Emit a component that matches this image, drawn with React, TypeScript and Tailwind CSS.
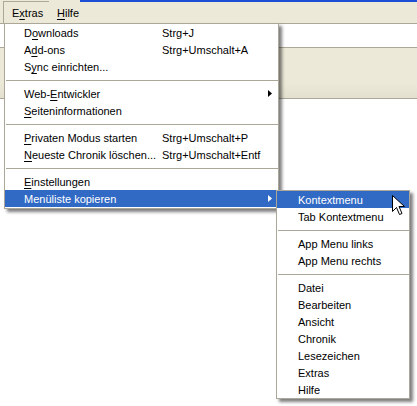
import React from "react";

type Item =
  | { kind: "item"; label: React.ReactNode; shortcut?: string; arrow?: boolean; active?: boolean }
  | { kind: "sep" };

// underline one letter of a label (access key)
function K({ pre, k, post }: { pre?: string; k: string; post?: string }) {
  return (
    <>
      {pre}
      <span className="underline underline-offset-[2px] decoration-1">{k}</span>
      {post}
    </>
  );
}

const mainItems: Item[] = [
  { kind: "item", label: <K pre="D" k="o" post="wnloads" />, shortcut: "Strg+J" },
  { kind: "item", label: <K pre="A" k="d" post="d-ons" />, shortcut: "Strg+Umschalt+A" },
  { kind: "item", label: <K pre="S" k="y" post="nc einrichten..." /> },
  { kind: "sep" },
  { kind: "item", label: <K pre="Web-" k="E" post="ntwickler" />, arrow: true },
  { kind: "item", label: <K k="S" post="eiteninformationen" /> },
  { kind: "sep" },
  { kind: "item", label: <K k="P" post="rivaten Modus starten" />, shortcut: "Strg+Umschalt+P" },
  { kind: "item", label: <K k="N" post="eueste Chronik löschen..." />, shortcut: "Strg+Umschalt+Entf" },
  { kind: "sep" },
  { kind: "item", label: <K k="E" post="instellungen" /> },
  { kind: "item", label: "Menüliste kopieren", arrow: true, active: true },
];

const subItems: Item[] = [
  { kind: "item", label: "Kontextmenu", active: true },
  { kind: "item", label: "Tab Kontextmenu" },
  { kind: "sep" },
  { kind: "item", label: "App Menu links" },
  { kind: "item", label: "App Menu rechts" },
  { kind: "sep" },
  { kind: "item", label: "Datei" },
  { kind: "item", label: "Bearbeiten" },
  { kind: "item", label: "Ansicht" },
  { kind: "item", label: "Chronik" },
  { kind: "item", label: "Lesezeichen" },
  { kind: "item", label: "Extras" },
  { kind: "item", label: "Hilfe" },
];

function Arrow({ white }: { white?: boolean }) {
  return (
    <svg width="4" height="7" viewBox="0 0 4 7" className="block">
      <path d="M0 0 L4 3.5 L0 7 Z" fill={white ? "#ffffff" : "#000000"} />
    </svg>
  );
}

function Menu({ items, textLeft }: { items: Item[]; textLeft: string }) {
  return (
    <div className="flex flex-col">
      {items.map((it, i) =>
        it.kind === "sep" ? (
          <div key={i} className="h-[10px] flex items-center pl-px">
            <div className="h-px w-full bg-[#aca899]" />
          </div>
        ) : (
          <div
            key={i}
            className={`h-[17px] flex items-center pt-[2px] ${textLeft} pr-[6px] ${
              it.active ? "bg-[#316ac5] text-white" : "text-black"
            }`}
          >
            <span className="w-[138px] shrink-0 whitespace-nowrap">{it.label}</span>
            <span className="flex-1 whitespace-nowrap">{it.shortcut}</span>
            {it.arrow && (
              <span className="-mt-[2px]">
                <Arrow white={it.active} />
              </span>
            )}
          </div>
        )
      )}
    </div>
  );
}

export default function App() {
  return (
    <div
      className="relative w-[417px] h-[406px] overflow-hidden bg-white text-[11px] leading-none"
      style={{ fontFamily: '"Liberation Sans", Arial, sans-serif' }}
    >
      {/* menubar */}
      <div className="h-[23px] bg-[#ece9d8] flex items-stretch pl-[3px] pt-px">
        <div className="w-[46px] border-l border-t border-[#aca899] flex items-center pl-[8px] pt-[2px]">
          <K pre="E" k="x" post="tras" />
        </div>
        <div className="flex items-center pl-[8px] pt-[2px]">
          <K k="H" post="ilfe" />
        </div>
      </div>
      {/* title bar edge peeking in */}
      <div className="absolute left-[80px] right-0 top-0 h-[2px] bg-[#1c4fd6]" />
      {/* tab strip */}
      <div className="h-[24px] border-t border-[#aca899] bg-white" />
      {/* toolbar */}
      <div className="h-[51px] border-t border-[#aca899] bg-gradient-to-b from-[#ece9d8] from-70% to-[#e3e0cf]" />
      <div className="border-t border-[#aca899]" />

      {/* main menu */}
      <div className="absolute left-[4px] top-[23px] w-[275px] bg-white border border-[#aca899] pb-px shadow-[3px_3px_3px_rgba(0,0,0,0.5)]">
        <Menu items={mainItems} textLeft="pl-[19px]" />
      </div>

      {/* submenu */}
      <div className="absolute left-[276px] top-[190px] w-[134px] bg-white border border-[#aca899] shadow-[3px_3px_3px_rgba(0,0,0,0.5)]">
        <Menu items={subItems} textLeft="pl-[21px]" />
      </div>

      {/* mouse cursor */}
      <svg
        className="absolute left-[392px] top-[195px]"
        width="13"
        height="21"
        viewBox="0 0 13 21"
      >
        <path
          d="M0.5 0.5 L0.5 16.5 L4.5 12.5 L7.5 19.5 L10 18.5 L7 11.5 L12.5 11.5 Z"
          fill="#ffffff"
          stroke="#000000"
          strokeWidth="1"
        />
      </svg>
    </div>
  );
}
